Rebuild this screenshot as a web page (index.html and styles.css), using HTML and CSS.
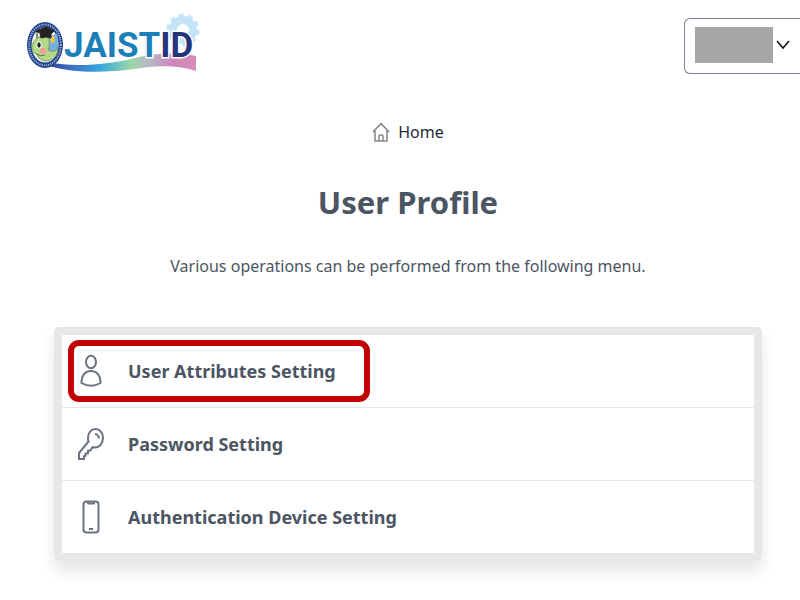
FILE: index.html
```html
<!DOCTYPE html>
<html lang="en">
<head>
  <meta charset="UTF-8" />
  <meta name="viewport" content="width=device-width, initial-scale=1.0"/>
  <title>User Profile</title>
  <link rel="stylesheet" href="styles.css">
</head>
<body>
  <header class="header">
    <svg class="logo" viewBox="0 0 180 64" role="img" aria-label="JAISTID">
      <defs>
        <linearGradient id="wave" x1="0" x2="1">
          <stop offset="0" stop-color="#253a8c"/>
          <stop offset="0.2" stop-color="#3f6fc0"/>
          <stop offset="0.38" stop-color="#35a5e0"/>
          <stop offset="0.58" stop-color="#9bd6a8"/>
          <stop offset="0.72" stop-color="#b9b2c8"/>
          <stop offset="0.85" stop-color="#cf86bb"/>
          <stop offset="1" stop-color="#d78cb8"/>
        </linearGradient>
      </defs>
      <!-- gear -->
      <circle cx="157" cy="18" r="10" fill="none" stroke="#c3e4f8" stroke-width="8"/>
      <circle cx="157" cy="18" r="14" fill="none" stroke="#c3e4f8" stroke-width="5" stroke-dasharray="4.6 4.2"/>
      <!-- wave -->
      <path d="M14 49C48 56 78 53 105 47C128 41 150 40 170 44V59C148 52 128 54 108 57C78 61 42 62 14 51Z" fill="url(#wave)"/>
      <text class="logo-text" x="38" y="45">JAIST<tspan class="logo-id">ID</tspan></text>
      <!-- mascot badge -->
      <ellipse cx="19" cy="33" rx="18" ry="23" fill="#24458e"/>
      <ellipse cx="19" cy="33" rx="15.8" ry="20.4" fill="none" stroke="#b9c8e4" stroke-width="1.8" stroke-dasharray="1 1.2"/>
      <ellipse cx="19" cy="33" rx="13.4" ry="17.6" fill="#f3f6ee"/>
      <path d="M21 24L31 22Q34 33 31 41L23 48Z" fill="#78aee0"/>
      <path d="M24 25l4-2 1 7-4 1z" fill="#e8c94a"/>
      <path d="M6 33Q9 26 15 24Q22 20 23 27Q24 34 22 38Q30 42 32 35Q32 46 24 48Q17 51 12 45L11 42Q5 41 6 33Z" fill="#b5d98a" stroke="#6f9154" stroke-width="0.8"/>
      <path d="M10 42q5 3 9 1" fill="none" stroke="#55743b"/>
      <ellipse cx="13" cy="33" rx="2.6" ry="3.5" fill="#fff"/>
      <ellipse cx="13" cy="33" rx="1.7" ry="2.8" fill="#222"/>
      <circle cx="17" cy="39" r="3" fill="#f59b9b"/>
      <path d="M10 19l10-4 8 4-3 3v4q-5-2-10 0l-1-5zM11 20v6" fill="#242424" stroke="#242424"/>
    </svg>
    <button class="account" type="button" aria-label="Account menu">
      <span class="account-name"></span>
      <svg class="chevron" viewBox="0 0 14 10" aria-hidden="true"><path d="M1 1l6 7 6-7"/></svg>
    </button>
  </header>

  <main class="main">
    <nav>
      <a class="home" href="#">
        <svg class="home-icon" viewBox="0 0 18 20" aria-hidden="true">
          <path d="M1 10L9 1.500L17 10M3 8.500V19H15V8.500M7 19V14Q7 13 8 13H10Q11 13 11 14V19"/>
        </svg>
        Home
      </a>
    </nav>
    <h1>User Profile</h1>
    <p class="lead">Various operations can be performed from the following menu.</p>

    <ul class="menu">
      <li class="marked">
        <a href="#">
          <svg class="icon" viewBox="0 0 28 36" aria-hidden="true">
            <ellipse cx="14" cy="9" rx="5" ry="6.200"/>
            <path d="M4.500 30C4 23 8 18 14 18S24 23 23.500 30Q14 35.500 4.500 30Z"/>
          </svg>
          User Attributes Setting
        </a>
      </li>
      <li>
        <a href="#">
          <svg class="icon" viewBox="0 0 28 36" aria-hidden="true">
            <path d="M18.500 3C23 3 26 7 26 12S22.500 21.500 18 21.500Q16.500 21.500 15.500 21L13.500 24.500H11V27.500H8.500V30H7V33H2V27L11.500 15.500Q11 13.500 11 12C11 7 14 3 18.500 3ZM18 8Q21.500 8.500 22 12.500"/>
          </svg>
          Password Setting
        </a>
      </li>
      <li>
        <a href="#">
          <svg class="icon" viewBox="0 0 28 36" aria-hidden="true">
            <rect x="6.500" y="2.500" width="15" height="31" rx="3"/>
            <path d="M11 3v1.500h6V3M12 30h4"/>
          </svg>
          Authentication Device Setting
        </a>
      </li>
    </ul>
  </main>
</body>
</html>
```
FILE: styles.css
```css
* {
  box-sizing: border-box;
}

body {
  margin: 0;
  background-color: #fff;
  color: #4b5563;
  font-family: "Noto Sans", "Open Sans", sans-serif;
  font-size: 16px;
}

a {
  color: inherit;
  text-decoration: none;
}

svg {
  flex: none;
}

.header {
  display: flex;
  justify-content: space-between;
  align-items: flex-start;
  padding: 12px 0 0 26px;
}

.logo {
  width: 180px;
  height: 64px;
}

.logo-text {
  fill: #1c7fb8;
  font-family: Roboto, "Noto Sans", sans-serif;
  font-size: 35px;
  font-weight: 700;
  stroke: #fff;
  stroke-width: 3px;
  paint-order: stroke;
}

.logo-id {
  fill: #24357c;
}

.account {
  display: flex;
  align-items: center;
  gap: 3px;
  height: 56px;
  margin-top: 6px;
  padding: 0 10px 2px;
  background-color: #fff;
  border: 1px solid #7b8496;
  border-right: 0;
  border-radius: 6px 0 0 6px;
}

.account-name {
  width: 78px;
  height: 36px;
  background-color: #a6a6a6;
}

.chevron {
  width: 14px;
  height: 10px;
  fill: none;
  stroke: #111;
  stroke-width: 1.5;
}

.main {
  padding: 44px 38px 36px 54px;
  text-align: center;
}

.home {
  display: inline-flex;
  align-items: center;
  gap: 8px;
  color: #1f2937;
  line-height: 24px;
}

.home-icon {
  width: 18px;
  height: 20px;
  fill: none;
  stroke: #858585;
  stroke-width: 1.5;
  stroke-linejoin: round;
}

h1 {
  margin: 35px 0 0;
  font-size: 31px;
  line-height: 40px;
}

.lead {
  margin: 32px 0 49px;
  line-height: 24px;
}

.menu {
  margin: 0;
  padding: 0;
  list-style: none;
  border: 8px solid #e7e7e7;
  border-radius: 5px;
  box-shadow: 0 10px 15px rgba(0, 0, 0, 0.1);
  text-align: left;
}

.menu li {
  position: relative;
}

.menu li + li {
  border-top: 1px solid #e5e7eb;
}

.menu a {
  display: flex;
  align-items: center;
  gap: 23px;
  height: 72px;
  padding: 0 15px;
  font-size: 18px;
  font-weight: 700;
}

.icon {
  width: 28px;
  height: 36px;
  fill: none;
  stroke: #6b7280;
  stroke-width: 2;
  stroke-linejoin: round;
}

.marked::after {
  content: "";
  position: absolute;
  box-sizing: border-box;
  top: 5px;
  left: 6px;
  width: 302px;
  height: 62px;
  border: 6px solid #c00000;
  border-radius: 11px;
  pointer-events: none;
}
```
